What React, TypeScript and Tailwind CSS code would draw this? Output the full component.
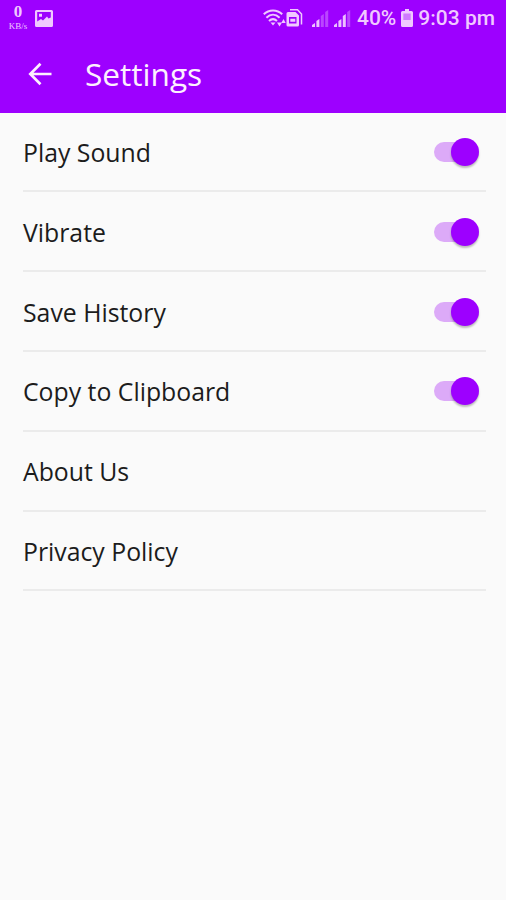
const settings = [
  { label: "Play Sound", toggle: true },
  { label: "Vibrate", toggle: true },
  { label: "Save History", toggle: true },
  { label: "Copy to Clipboard", toggle: true },
  { label: "About Us", toggle: false },
  { label: "Privacy Policy", toggle: false },
];

const PictureIcon = () => (
  <svg width="18" height="17" viewBox="0 0 18 17">
    <path
      fill="currentColor"
      fillRule="evenodd"
      d="M1.5 0h15A1.5 1.5 0 0 1 18 1.500v14a1.500 1.500 0 0 1-1.500 1.500h-15A1.500 1.500 0 0 1 0 15.500v-14A1.500 1.500 0 0 1 1.500 0ZM2.200 2v9.500L6 9l2 1.500 4-4 1.500 2 2.300-1V2ZM4 3.800h3v3H4Z"
    />
  </svg>
);

const WifiIcon = () => (
  <svg width="23" height="18" viewBox="0 0 23 18" fill="none" stroke="currentColor" strokeWidth="2">
    <path d="M.8 5.300C6 .2 14 .2 19.200 5.300" />
    <path d="M3.400 8.700c4-3.900 9.200-3.900 13.200 0" />
    <path d="M6 12c2.500-2.400 5.500-2.400 8 0" />
    <path d="M7.500 13.400h5L10 16.400Z" fill="currentColor" stroke="none" />
    <path d="M14 13.500h5L16.500 17.500ZM18.300 14l2.200-4 2.200 4Z" fill="currentColor" stroke="none" />
  </svg>
);

const SimIcon = () => (
  <svg width="17" height="18" viewBox="0 0 17 18">
    <path
      d="M4 .8h7.500L15.500 5v10.500"
      fill="none"
      stroke="currentColor"
      strokeWidth="1.500"
    />
    <path
      fill="currentColor"
      fillRule="evenodd"
      d="M2 3h7.500L13 6.500V16a1.500 1.500 0 0 1-1.500 1.500H2A1.500 1.500 0 0 1 .5 16V4.500A1.500 1.500 0 0 1 2 3ZM3 8v6.500h7.500V8ZM4.300 9.800h5v3h-5Z"
    />
  </svg>
);

const SignalIcon = ({ bars }: { bars: number }) => (
  <svg width="17" height="17" viewBox="0 0 17 17" fill="currentColor">
    {[3, 7, 12, 16].map((height, idx) => (
      <path
        key={height}
        d={`M${idx * 4.4} 17v${1 - height}l3-2v${height + 1}Z`}
        opacity={idx < bars ? 0.95 : 0.35}
      />
    ))}
  </svg>
);

const BatteryIcon = () => (
  <svg width="12" height="18" viewBox="0 0 12 18" fill="currentColor">
    <path d="M4 0h4v2h2.500A1.500 1.500 0 0 1 12 3.500v13a1.500 1.500 0 0 1-1.500 1.500h-9A1.500 1.500 0 0 1 0 16.500v-13A1.500 1.500 0 0 1 1.500 2H4Z" />
    <path d="M2.300 4.500h7.400V11H2.300Z" fill="#9d00ff" opacity=".4" />
  </svg>
);

const StatusBar = () => (
  <div className="flex h-9 items-center pl-2 pr-[11px] text-[#f0c9ff]">
    <div className="flex w-5 flex-col items-center pb-0.5 font-['Liberation_Serif',serif]">
      <span className="text-[17px] font-bold leading-[19px]">0</span>
      <span className="text-[9px] leading-[11px]">KB/s</span>
    </div>
    <div className="ml-[7px]">
      <PictureIcon />
    </div>
    <div className="ml-auto flex items-center font-['Roboto',sans-serif] text-[21px] font-medium leading-none">
      <WifiIcon />
      <SimIcon />
      <div className="ml-[9px]">
        <SignalIcon bars={2} />
      </div>
      <div className="ml-[5px]">
        <SignalIcon bars={3} />
      </div>
      <span className="ml-1.5">40%</span>
      <div className="mx-[5px]">
        <BatteryIcon />
      </div>
      <span>9:03 pm</span>
    </div>
  </div>
);

const Switch = () => (
  <div className="relative h-5 w-[45px]">
    <div className="h-full w-9 rounded-full bg-[#dcaaf8]"></div>
    <div className="absolute -top-1 right-0 size-7 rounded-full bg-[#9d00ff] shadow-[0_2px_2px_rgba(0,0,0,0.25)]"></div>
  </div>
);

const App = () => {
  return (
    <div className="min-h-screen bg-[#fafafa] font-['Open_Sans',sans-serif]">
      <header className="h-[112.7px] bg-[#9d00ff]">
        <StatusBar />
        <div className="flex h-[76px] items-center pl-7 text-[#fdf0ff]">
          <svg width="24" height="24" viewBox="0 0 24 24" fill="none" stroke="currentColor" strokeWidth="2.700">
            <path d="M23.500 12H2.500M12.500 1.800 2.300 12l10.200 10.200" />
          </svg>
          <h1 className="ml-[33px] text-[31.6px] leading-none">Settings</h1>
        </div>
      </header>
      <main className="pl-[23px] pr-5">
        {settings.map((item) => (
          <div
            key={item.label}
            className="flex h-[79.8px] items-center justify-between border-b-2 border-[#ebebeb] pr-[7px] pt-px"
          >
            <span className="pt-px text-[24.8px] text-[#1c1c1c]">{item.label}</span>
            {item.toggle && <Switch />}
          </div>
        ))}
      </main>
    </div>
  );
};

export default App;
